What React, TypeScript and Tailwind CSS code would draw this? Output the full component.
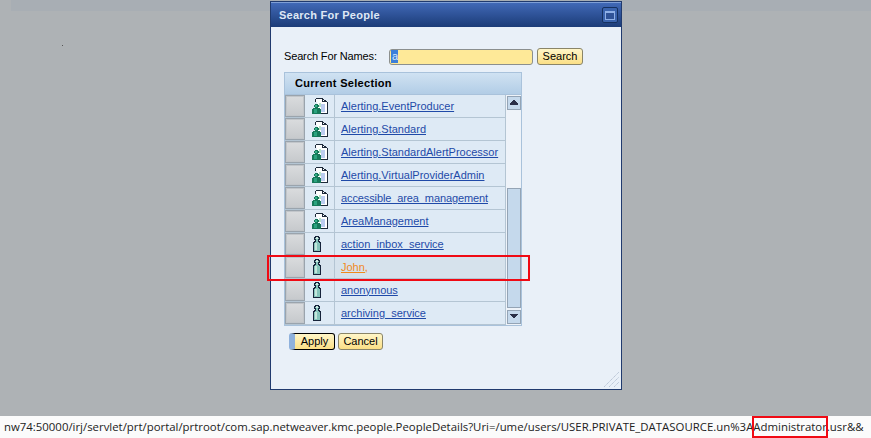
const font = "font-['Liberation_Sans',Arial,sans-serif]";

const rows = [
  { name: "Alerting.EventProducer", group: true },
  { name: "Alerting.Standard", group: true },
  { name: "Alerting.StandardAlertProcessor", group: true },
  { name: "Alerting.VirtualProviderAdmin", group: true },
  { name: "accessible_area_management", group: true, tight: true },
  { name: "AreaManagement", group: true },
  { name: "action_inbox_service", group: false },
  { name: "John,", group: false, hot: true },
  { name: "anonymous", group: false },
  { name: "archiving_service", group: false },
];

function GroupIcon() {
  return (
    <svg width="16" height="16" viewBox="0 0 16 16" shapeRendering="crispEdges">
      <path d="M3.5 .5h7l2 2h1l2 2v10.500h-8" fill="#fff" stroke="#1d2a3a" />
      <path d="M3.500 .5v3" stroke="#1d2a3a" />
      <path d="M10.500 .5v3h3" fill="none" stroke="#1d2a3a" />
      <rect x="7" y="5" width="2" height="4" fill="#b5e3c8" />
      <rect x="9" y="6" width="4" height="8" fill="#bccdf0" />
      <path d="M3 6h3v1h1v2H6v1h2v1h1v5H0v-5h1v-1h2V9H2V7h1z" fill="#16795a" />
      <rect x="3" y="7" width="2" height="2" fill="#35b08a" />
      <rect x="2" y="11" width="3" height="4" fill="#2aa37e" />
    </svg>
  );
}

function UserIcon() {
  return (
    <svg width="16" height="16" viewBox="0 0 16 16" shapeRendering="crispEdges">
      <path d="M3.500 .5h3v1h1v2h-1v2h1v1h1v9h-7v-9h1v-1h1v-2h-1v-2h1z" fill="#85c4bb" stroke="#16233a" />
      <rect x="4" y="1" width="2" height="2" fill="#cfe9e2" />
      <rect x="3" y="7" width="2" height="7" fill="#c4e6dc" />
    </svg>
  );
}

function Arrow({ down }: { down?: boolean }) {
  return (
    <svg width="10" height="6" viewBox="0 0 10 6" shapeRendering="crispEdges">
      <path d={down ? "M1 0h8v1h-1v1h-1v1h-1v1h-2v-1h-1v-1h-1v-1h-1z" : "M4 0h2v1h1v1h1v1h1v2h-8v-2h1v-1h1v-1h1z"} fill="#2a2f47" />
    </svg>
  );
}

function YellowButton({ label, active, width }: { label: string; active?: boolean; width: string }) {
  return (
    <button
      className={`${width} h-[17px] rounded-[3px] border bg-gradient-to-b from-[#fff6c8] to-[#fbdf85] text-[11px] leading-none text-black ${
        active ? "border-black border-l-[6px] border-l-[#8fb1dc]" : "border-[#8a8568]"
      }`}
    >
      {label}
    </button>
  );
}

export default function App() {
  return (
    <div className={`${font} w-[871px] h-[438px] overflow-hidden bg-[#aeb2b5] flex flex-col`}>
      <div className="h-[416px] shrink-0 relative">
        <div className="h-[11px] ml-[11px] bg-[#a8aeb4]" />
        <div className="absolute left-[62px] top-[45px] w-px h-px bg-[#555]" />

        {/* dialog */}
        <div className="absolute left-[270px] top-[1px] w-[352px] h-[389px] bg-[#e9f0f8] border border-[#203a6e] flex flex-col">
          <div className="h-[25px] shrink-0 flex items-center justify-between pl-2 pr-[3px] border-t border-[#7f9fd6] bg-gradient-to-b from-[#4169b7] to-[#1c3c78]">
            <span className="text-[11px] font-bold text-[#dfe8f5] tracking-[0.25px]">Search For People</span>
            <span className="w-4 h-4 rounded-[2px] border border-[#15305f] bg-[#3a63ad] flex items-center justify-center">
              <span className="w-[10px] h-[9px] bg-[#2f5296] border border-[#8fb0e6] border-t-2" />
            </span>
          </div>

          <div className="flex-1 relative pl-[13px] pt-[21px]">
            <div className="flex items-center h-[17px]">
              <span className="text-[11px] text-black w-[105px] tracking-[-0.15px]">Search For Names:</span>
              <div className="w-[144px] h-[16px] rounded-[3px] border border-[#8b8f8e] bg-[#fee998] flex items-center pl-px">
                <span className="bg-[#3c7fd9] text-[#dbe9f7] text-[11px] leading-[13px] w-[7px] pl-px">a</span>
              </div>
              <div className="ml-[4px] flex">
                <YellowButton label="Search" width="w-[46px]" />
              </div>
            </div>

            <div className="mt-[7px] w-[238px] border border-[#a9c2db]">
              <div className="h-[22px] bg-gradient-to-b from-[#d0e2f2] to-[#b2cde6] border-b border-[#a9c2db] flex items-center pl-[10px]">
                <span className="text-[11px] font-bold text-black tracking-[0.3px]">Current Selection</span>
              </div>
              <div className="flex">
                <div className="w-[220px]">
                  {rows.map((r) => (
                    <div
                      key={r.name}
                      className={`flex h-[23px] border-b border-[#b4c5d3] ${r.hot ? "bg-[#d6e2ec]" : "bg-[#deeaf5]"}`}
                    >
                      <div className="w-[20px] h-[22px] bg-gradient-to-b from-[#dadcde] to-[#c6c9cc] border border-[#9aa4ad] outline outline-1 -outline-offset-2 outline-[#c2c6ca]" />
                      <div className="w-[30px] flex items-center pl-[7px] border-r border-[#b4c5d3]">
                        {r.group ? <GroupIcon /> : <UserIcon />}
                      </div>
                      <div className="flex-1 flex items-center pl-[6px]">
                        <span
                          className={`text-[11px] underline ${r.hot ? "text-[#f08a1d]" : "text-[#1f4aa8]"} ${
                            r.tight ? "tracking-[-0.11px]" : ""
                          }`}
                        >
                          {r.name}
                        </span>
                      </div>
                    </div>
                  ))}
                </div>
                <div className="w-[16px] bg-[#eef3f9] border-l border-[#b4c5d3] flex flex-col items-center px-px py-px">
                  <div className="w-[14px] h-[14px] bg-[#c5d9ec] border border-[#94a4b5] flex items-center justify-center">
                    <Arrow />
                  </div>
                  <div className="flex-1" />
                  <div className="w-[14px] h-[120px] bg-[#c5d9ec] border border-[#94a4b5]" />
                  <div className="w-[14px] h-[14px] mt-[2px] bg-[#c5d9ec] border border-[#94a4b5] flex items-center justify-center">
                    <Arrow down />
                  </div>
                </div>
              </div>
            </div>

            <div className="flex gap-[3px] mt-[7px] ml-[5px]">
              <YellowButton label="Apply" active width="w-[46px]" />
              <YellowButton label="Cancel" width="w-[45px]" />
            </div>

            {/* resize grip */}
            <svg className="absolute right-[2px] bottom-[2px]" width="15" height="15" viewBox="0 0 15 15">
              <path d="M0 15L15 0M5 15L15 5M10 15L15 10" stroke="#b9c5d6" strokeWidth="1" strokeDasharray="1.500 0.500" />
            </svg>
          </div>
        </div>

        {/* callout around John */}
        <div className="absolute left-[267px] top-[255px] w-[263px] h-[26px] border-2 border-[#f00a14]" />
      </div>

      {/* status bar */}
      <div className="relative h-[22px] bg-[#fbfbfb] font-['Open_Sans',sans-serif] text-[11.4px] text-[#222] flex items-center pl-[4px] whitespace-nowrap overflow-hidden">
        nw74:50000/irj/servlet/prt/portal/prtroot/com.sap.netweaver.kmc.people.PeopleDetails?Uri=/ume/users/USER.PRIVATE_DATASOURCE.un%3AAdministrator.usr&amp;&amp;
        <div className="absolute left-[752px] top-0 w-[76px] h-[22px] border-2 border-[#f00a14]" />
      </div>
    </div>
  );
}
